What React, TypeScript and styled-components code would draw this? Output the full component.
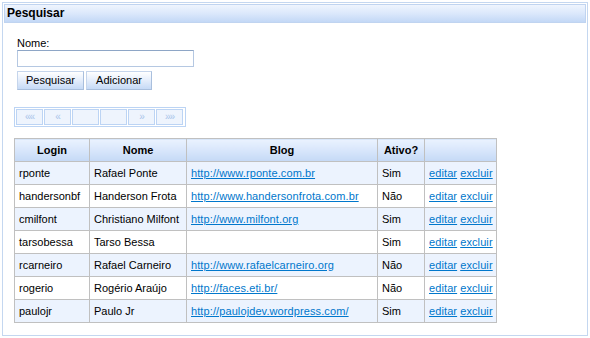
import React from "react";
import styled, { createGlobalStyle } from "styled-components";

const Global = createGlobalStyle`
  html, body { margin: 0; padding: 0; background: #fff; }
  body { font-family: "Liberation Sans", Arial, sans-serif; font-size: 11px; color: #000; }
`;

const Panel = styled.div`
  margin: 2px 0 0 2px;
  border: 1px solid #c4d7f0;
  padding: 1px;
  box-sizing: content-box;
  display: flex;
  flex-direction: column;
  width: 582px;
  height: 330px;
`;

const PanelHeader = styled.div`
  height: 17px;
  border: 1px solid #c0d4f0;
  background: linear-gradient(to bottom, #eff5fe 0%, #dbe8fb 50%, #c3d8f6 100%);
  font-weight: bold;
  font-size: 12px;
  line-height: 17px;
  padding: 0 2px;
`;

const PanelBody = styled.div`
  padding: 14px 0 0 10px;
  display: flex;
  flex-direction: column;
`;

const Form = styled.div`
  padding-left: 3px;
  display: flex;
  flex-direction: column;
`;

const Label = styled.label`
  line-height: 13px;
  height: 13px;
`;

const Input = styled.input`
  width: 177px;
  height: 17px;
  box-sizing: border-box;
  border: 1px solid #b5c8e2;
  border-top-color: #8ea6c6;
  margin: 0;
  padding: 0 2px;
  font-family: inherit;
  font-size: 11px;
  background: #fff;
`;

const ButtonRow = styled.div`
  display: flex;
  gap: 2px;
  margin-top: 4px;
`;

const Button = styled.button<{ $w: number }>`
  width: ${(p) => p.$w}px;
  height: 19px;
  box-sizing: border-box;
  margin: 0;
  padding: 0;
  border: 1px solid #a9bfdd;
  border-left-color: #c5d5ec;
  border-top-color: #c5d5ec;
  background: linear-gradient(to bottom, #ffffff 0%, #e4edfb 50%, #c6daf6 100%);
  font-family: "Liberation Sans", Arial, sans-serif;
  font-size: 11px;
  color: #000;
  line-height: 17px;
`;

const Scroller = styled.div`
  margin-top: 17px;
  width: 172px;
  height: 20px;
  box-sizing: border-box;
  border: 1px solid #bcd4f4;
  padding: 1px;
  display: flex;
  gap: 1px;
`;

const ScrollCell = styled.div`
  width: 27px;
  height: 16px;
  box-sizing: border-box;
  border: 1px solid #bcd4f4;
  background: #eef4fd;
  color: #a9c4ea;
  font-size: 10px;
  line-height: 13px;
  text-align: center;
  letter-spacing: -1px;
`;

const Table = styled.table`
  margin-top: 11px;
  border-collapse: collapse;
  width: 483px;
  table-layout: fixed;
  border: 1px solid #c0c0c0;
`;

const Th = styled.th<{ $w: number }>`
  width: ${(p) => p.$w}px;
  height: 22px;
  padding: 0;
  border: 1px solid #c0c0c0;
  background: linear-gradient(to bottom, #eaf2fe 0%, #d8e6fb 50%, #c4d9f6 100%);
  font-weight: bold;
  font-size: 11px;
  text-align: center;
`;

const Tr = styled.tr<{ $alt: boolean }>`
  background: ${(p) => (p.$alt ? "#ffffff" : "#ecf3fe")};
`;

const Td = styled.td`
  height: 22px;
  padding: 0 4px;
  border: 1px solid #c0c0c0;
  font-size: 11px;
  white-space: nowrap;
  overflow: hidden;
`;

const Link = styled.a`
  color: #0077cc;
  text-decoration: underline;
  letter-spacing: 0.1px;
`;

const rows = [
  ["rponte", "Rafael Ponte", "http://www.rponte.com.br", "Sim"],
  ["handersonbf", "Handerson Frota", "http://www.handersonfrota.com.br", "Não"],
  ["cmilfont", "Christiano Milfont", "http://www.milfont.org", "Sim"],
  ["tarsobessa", "Tarso Bessa", "", "Sim"],
  ["rcarneiro", "Rafael Carneiro", "http://www.rafaelcarneiro.org", "Não"],
  ["rogerio", "Rogério Araújo", "http://faces.eti.br/", "Não"],
  ["paulojr", "Paulo Jr", "http://paulojdev.wordpress.com/", "Sim"],
];

export default function App() {
  return (
    <>
      <Global />
      <Panel>
        <PanelHeader>Pesquisar</PanelHeader>
        <PanelBody>
          <Form>
            <Label>Nome:</Label>
            <Input type="text" />
            <ButtonRow>
              <Button $w={67}>Pesquisar</Button>
              <Button $w={66}>Adicionar</Button>
            </ButtonRow>
          </Form>
          <Scroller>
            <ScrollCell>««</ScrollCell>
            <ScrollCell>«</ScrollCell>
            <ScrollCell />
            <ScrollCell />
            <ScrollCell>»</ScrollCell>
            <ScrollCell>»»</ScrollCell>
          </Scroller>
          <Table>
            <thead>
              <tr>
                <Th $w={74}>Login</Th>
                <Th $w={96}>Nome</Th>
                <Th $w={190}>Blog</Th>
                <Th $w={46}>Ativo?</Th>
                <Th $w={71}></Th>
              </tr>
            </thead>
            <tbody>
              {rows.map((r, i) => (
                <Tr key={r[0]} $alt={i % 2 === 1}>
                  <Td>{r[0]}</Td>
                  <Td>{r[1]}</Td>
                  <Td>{r[2] ? <Link href="#">{r[2]}</Link> : null}</Td>
                  <Td>{r[3]}</Td>
                  <Td>
                    <Link href="#">editar</Link> <Link href="#">excluir</Link>
                  </Td>
                </Tr>
              ))}
            </tbody>
          </Table>
        </PanelBody>
      </Panel>
    </>
  );
}
